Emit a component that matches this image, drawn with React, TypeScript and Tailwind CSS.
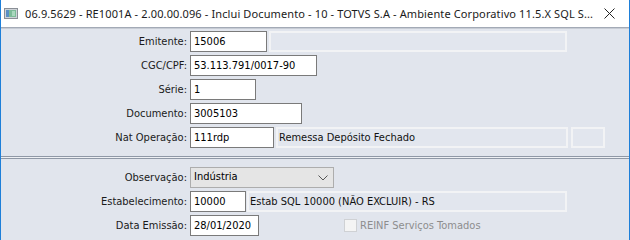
import React from "react";

const F = { fontFamily: "Tahoma, 'DejaVu Sans Condensed', 'DejaVu Sans', sans-serif" };

function Label({ children }: { children: React.ReactNode }) {
  return (
    <div className="w-[187px] shrink-0 pr-[1px] text-right text-[11px] leading-[21px] text-[#1a1a1a]">
      {children}
    </div>
  );
}

function Input({ w, value }: { w: number; value: string }) {
  return (
    <div
      className="h-[21px] shrink-0 border border-[#7a7a7a] bg-white pl-[3px] text-[11px] leading-[19px] text-black"
      style={{ width: w }}
    >
      {value}
    </div>
  );
}

function ReadOnly({ w, value }: { w: number; value?: string }) {
  return (
    <div
      className="h-[21px] shrink-0 border-2 border-[#f2f3f5] bg-[#e2e6ee] pl-[1px] text-[11px] leading-[17px] text-[#111]"
      style={{ width: w }}
    >
      {value}
    </div>
  );
}

export default function App() {
  return (
    <div
      className="flex h-[240px] w-[630px] flex-col overflow-hidden border-x border-[#1e7fd9] bg-[#e1e5ed]"
      style={F}
    >
      {/* title bar */}
      <div className="flex h-[27px] shrink-0 items-center bg-white">
        <svg width="16" height="12" viewBox="0 0 16 12" className="ml-[3px] mr-[5px] shrink-0">
          <rect x="0.5" y="0.5" width="13" height="10" fill="#cfd3d8" stroke="#8a8f96" />
          <rect x="2" y="2" width="3" height="7" fill="#5a8fc4" />
          <rect x="5" y="2" width="7" height="7" fill="#7dbb98" />
          <rect x="8" y="3" width="3" height="5" fill="#a9d8bd" />
        </svg>
        <div
          className="shrink-0 whitespace-nowrap text-[11px] leading-[27px] tracking-[0.12px] text-[#1a1a1a]"
          style={{ fontFamily: "'Noto Sans', 'Open Sans', sans-serif" }}
        >
          06.9.5629 - RE1001A - 2.00.00.096 - Inclui Documento - 10 - TOTVS S.A - Ambiente Corporativo 11.5.X SQL S...
        </div>
        <div className="flex-1" />
        <svg width="11" height="11" viewBox="0 0 11 11" className="mr-[14px] ml-[2px] shrink-0">
          <path d="M0.5 0.5 L10.5 10.5 M10.5 0.5 L0.5 10.5" stroke="#222" strokeWidth="1" />
        </svg>
      </div>
      <div className="h-[1px] bg-[#a3aab6]" />
      <div className="h-[1px] bg-[#c7ccd5]" />

      {/* section 1 */}
      <div className="flex flex-col gap-[3px] pt-[2px]">
        <div className="flex items-center">
          <Label>Emitente:</Label>
          <div className="ml-[2px] flex gap-[2px]">
            <Input w={77} value="15006" />
            <ReadOnly w={298} />
          </div>
        </div>
        <div className="flex items-center">
          <Label>CGC/CPF:</Label>
          <div className="ml-[2px]">
            <Input w={127} value="53.113.791/0017-90" />
          </div>
        </div>
        <div className="flex items-center">
          <Label>Série:</Label>
          <div className="ml-[2px]">
            <Input w={66} value="1" />
          </div>
        </div>
        <div className="flex items-center">
          <Label>Documento:</Label>
          <div className="ml-[2px]">
            <Input w={112} value="3005103" />
          </div>
        </div>
        <div className="flex items-center">
          <Label>Nat Operação:</Label>
          <div className="ml-[2px] flex gap-[2px]">
            <Input w={84} value="111rdp" />
            <ReadOnly w={292} value="Remessa Depósito Fechado" />
            <div className="ml-[1px]">
              <ReadOnly w={34} />
            </div>
          </div>
        </div>
      </div>

      {/* separator */}
      <div className="mt-[8px] h-[1px] bg-[#8f98a6]" />
      <div className="h-[1px] bg-[#eef0f4]" />
      <div className="h-[1px] bg-[#8f98a6]" />

      {/* section 2 */}
      <div className="flex flex-col gap-[3px] pt-[8px]">
        <div className="flex items-center">
          <Label>Observação:</Label>
          <div className="ml-[2px] flex h-[21px] w-[144px] items-center border border-[#adadad] bg-[#e5e5e5] pl-[3px] pr-[5px] text-[11px] text-black">
            <span className="flex-1">Indústria</span>
            <svg width="10" height="6" viewBox="0 0 10 6">
              <path d="M0.5 0.5 L5 5 L9.5 0.5" stroke="#555" strokeWidth="1" fill="none" />
            </svg>
          </div>
        </div>
        <div className="flex items-center">
          <Label>Estabelecimento:</Label>
          <div className="ml-[2px] flex gap-[1px]">
            <Input w={56} value="10000" />
            <ReadOnly w={320} value="Estab SQL 10000 (NÃO EXCLUIR) - RS" />
          </div>
        </div>
        <div className="flex items-center">
          <Label>Data Emissão:</Label>
          <div className="ml-[2px]">
            <Input w={69} value="28/01/2020" />
          </div>
          <div className="ml-[85px] flex items-center">
            <div className="h-[13px] w-[13px] border border-[#cfd1d4] bg-[#f4f4f4]" />
            <span className="ml-[3px] text-[11px] leading-[21px] text-[#8d8d8d]">REINF Serviços Tomados</span>
          </div>
        </div>
      </div>
    </div>
  );
}
